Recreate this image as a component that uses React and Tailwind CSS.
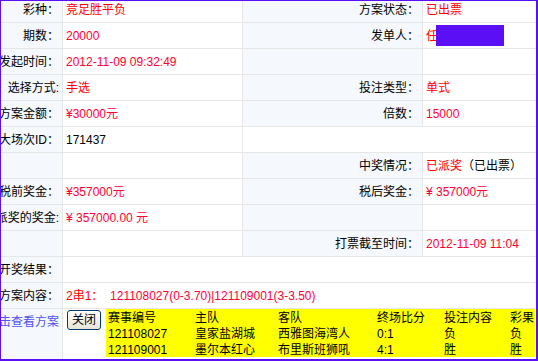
import React from 'react';

const RED = 'text-[#ff0000]';

function Label({ children, className = '' }) {
    return (
        <div className={`bg-[#f5f8fc] flex items-center justify-end pr-[3px] whitespace-nowrap text-black ${className}`}>
            {children}
        </div>
    );
}

function Value({ children, className = '' }) {
    return (
        <div className={`bg-white flex items-center pl-[3px] whitespace-nowrap ${className}`}>
            {children}
        </div>
    );
}

const MATCHES = [
    { id: '121108027', home: '皇家盐湖城', away: '西雅图海湾人', score: '0:1', bet: '负', result: '负' },
    { id: '121109001', home: '墨尔本红心', away: '布里斯班狮吼', score: '4:1', bet: '胜', result: '胜' },
];

export default function App() {
    return (
        <div className="w-[538px] h-[361px] relative overflow-hidden bg-white border-t border-l border-r-2 border-b-2 border-[#5b0ff5] text-[12px] leading-[16px] [font-family:'Liberation_Sans','Noto_Sans_CJK_SC',sans-serif]">
            {/* detail table */}
            <div className="grid grid-cols-[61px_179px_179px_113px] grid-rows-[21px_repeat(11,25px)_50px] gap-px bg-[#e6e6e6]">
                {/* row 1 - top cut off */}
                <Label className="pb-[4px]">彩种：</Label>
                <Value className={`pb-[4px] ${RED}`}>竞足胜平负</Value>
                <Label className="pb-[4px] pr-[2px]">方案状态：</Label>
                <Value className={`pb-[4px] ${RED}`}>已出票</Value>

                <Label>期数：</Label>
                <Value className="text-[#ff0033]">20000</Value>
                <Label className="pr-[2px]">发单人：</Label>
                <Value className={RED}>
                    任<span className="inline-block w-[68px] h-[21px] -ml-[2px] bg-[#5b0ff5]"></span>
                </Value>

                <Label>发起时间：</Label>
                <Value className="text-[#ff0033]">2012-11-09 09:32:49</Value>
                <Label />
                <Value />

                <Label>选择方式:</Label>
                <Value className={RED}>手选</Value>
                <Label className="pr-[2px]">投注类型：</Label>
                <Value className={RED}>单式</Value>

                <Label>方案金额：</Label>
                <Value className="text-[#ff0033]">¥30000元</Value>
                <Label className="pr-[2px]">倍数：</Label>
                <Value className="text-[#ff0033]">15000</Value>

                <Label>大场次ID：</Label>
                <Value className="text-black">171437</Value>
                <Value className="col-span-2" />

                <Label />
                <Value />
                <Label className="pr-[2px]">中奖情况：</Label>
                <Value>
                    <span className={RED}>已派奖</span>
                    <span className="text-black">（已出票）</span>
                </Value>

                <Label>税前奖金：</Label>
                <Value className="text-[#ff0033]">¥357000元</Value>
                <Label className="pr-[2px]">税后奖金：</Label>
                <Value className="text-[#ff0033]">¥ 357000元</Value>

                <Label>派奖的奖金:</Label>
                <Value className="text-[#ff0033]">¥ 357000.00 元</Value>
                <Label />
                <Value />

                <Label />
                <Value />
                <Label className="pr-[2px]">打票截至时间：</Label>
                <Value className="text-[#ff0033]">2012-11-09 11:04</Value>

                <Label>开奖结果：</Label>
                <Value className="col-span-3" />

                <Label>方案内容：</Label>
                <Value className="col-span-3 text-[#ff0033]">
                    <span className={RED}>2串1：</span>
                    <span>&nbsp;&nbsp;121108027(0-3.70)|121109001(3-3.50)</span>
                </Value>

                <Label className="items-start pt-[5px]">
                    <span className="text-[#5050f0] cursor-pointer">点击查看方案</span>
                </Label>
                <Value className="col-span-3" />
            </div>

            {/* floating match list */}
            <div className="absolute top-[308px] left-[66px] flex items-start">
                <button className="mt-[1px] w-[34px] h-[20px] rounded-[3px] border border-[#003c74] bg-gradient-to-b from-white to-[#e6e3d6] text-black text-[12px] leading-none flex items-center justify-center">
                    关闭
                </button>
                <div className="ml-[5px] w-[429px] h-[48px] bg-[#ffff00] pl-[2px] pt-[1px] text-black">
                    <div className="grid grid-cols-[87px_83px_99px_67px_66px_1fr] auto-rows-[16px] items-center whitespace-nowrap">
                        <span>赛事编号</span>
                        <span>主队</span>
                        <span>客队</span>
                        <span>终场比分</span>
                        <span>投注内容</span>
                        <span>彩果</span>
                        {MATCHES.map(m => (
                            <React.Fragment key={m.id}>
                                <span>{m.id}</span>
                                <span>{m.home}</span>
                                <span>{m.away}</span>
                                <span>{m.score}</span>
                                <span>{m.bet}</span>
                                <span>{m.result}</span>
                            </React.Fragment>
                        ))}
                    </div>
                </div>
            </div>
        </div>
    );
}
